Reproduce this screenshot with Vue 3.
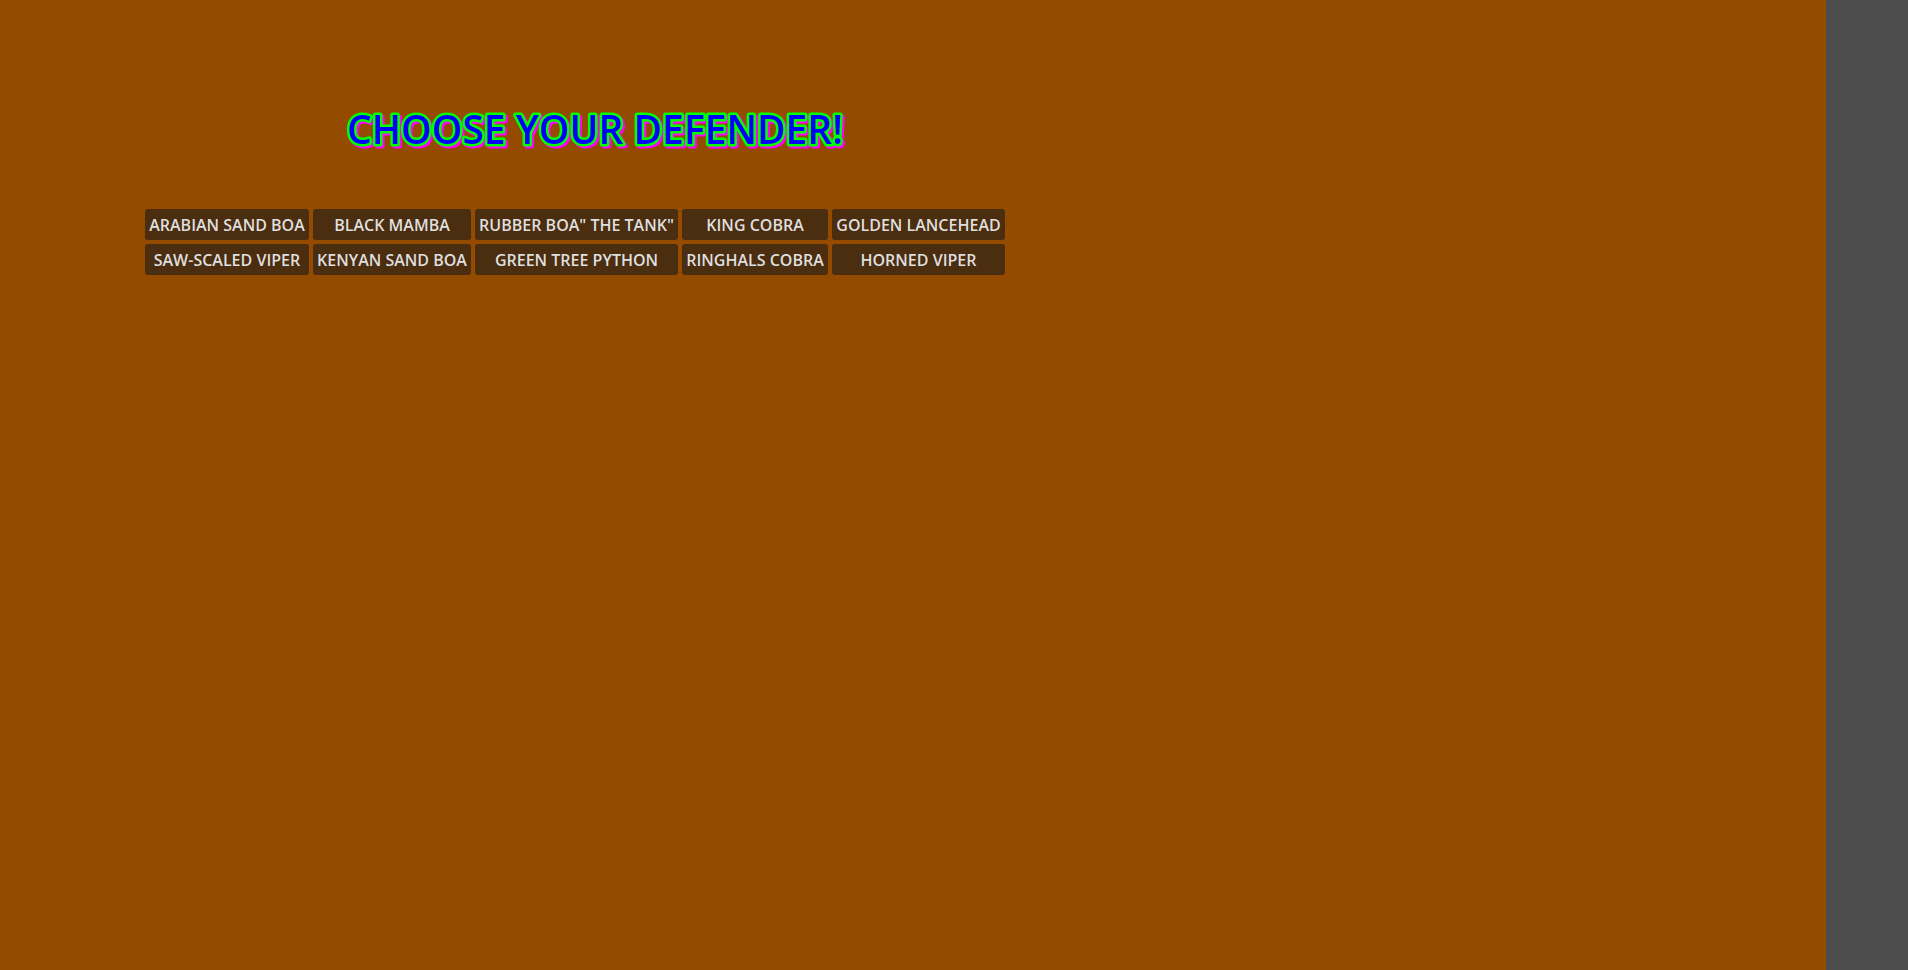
<script setup>
const defenders = [
  'ARABIAN SAND BOA',
  'BLACK MAMBA',
  'RUBBER BOA" THE TANK"',
  'KING COBRA',
  'GOLDEN LANCEHEAD',
  'SAW-SCALED VIPER',
  'KENYAN SAND BOA',
  'GREEN TREE PYTHON',
  'RINGHALS COBRA',
  'HORNED VIPER',
]
</script>

<template>
  <div class="screen">
    <main class="arena">
      <h1 class="title">
        <svg class="lettering" width="500" height="56">
          <text x="0" y="43">CHOOSE YOUR DEFENDER!</text>
        </svg>
      </h1>
      <div class="grid">
        <button v-for="name in defenders" :key="name" type="button" class="pick">{{ name }}</button>
      </div>
    </main>
    <div class="margin"></div>
  </div>
</template>

<style>
body {
  margin: 0;
  background: #4d4d4d;
}
</style>

<style scoped>
.screen {
  display: flex;
  min-height: 100vh;
  font-family: "Open Sans", "Noto Sans", sans-serif;
  font-weight: 600;
}
.arena {
  flex: 1;
  box-sizing: border-box;
  padding: 101px 0 0 145px;
  background: #944b00;
}
.margin {
  width: 82px;
  background: #4d4d4d;
}
.title {
  margin: 0 0 52px 202px;
  font-size: 39px;
  font-weight: 600;
}
.lettering {
  display: block;
  overflow: visible;
  fill: #0000ff;
  stroke: #00ff00;
  stroke-width: 5px;
  stroke-linejoin: round;
  paint-order: stroke fill;
  filter: drop-shadow(2px 2px 0 #ff00ff);
}
.grid {
  display: grid;
  grid-template-columns: 164px 158px 203px 146px 173px;
  gap: 4px;
}
.pick {
  margin: 0;
  padding: 5px 0 3px;
  border: 0;
  border-radius: 3px;
  background: #4b2d10;
  color: #dfdfdf;
  font-family: inherit;
  font-size: 16px;
  font-weight: 600;
  line-height: 23px;
  text-align: center;
  white-space: nowrap;
}
</style>
